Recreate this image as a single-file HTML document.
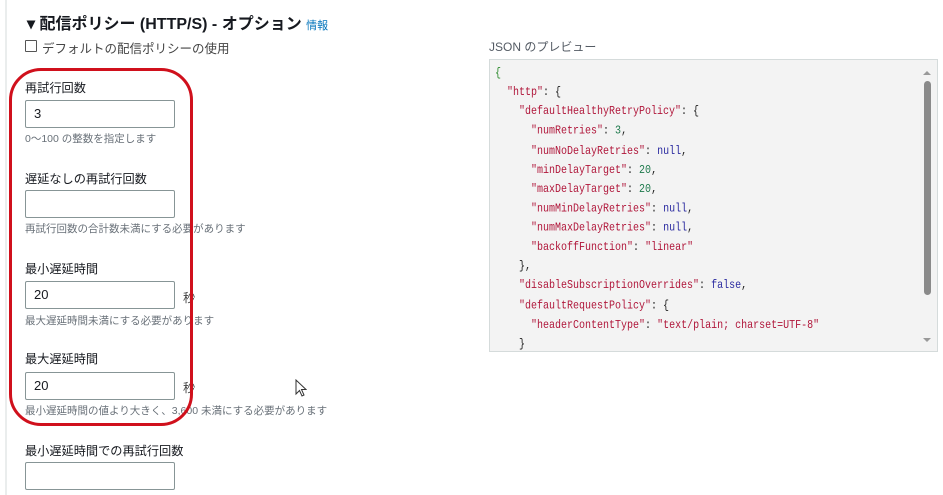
<!DOCTYPE html>
<html><head><meta charset="utf-8"><style>
body{margin:0;width:943px;height:495px;background:#fff;position:relative;overflow:hidden;font-family:"Liberation Sans","Noto Sans CJK JP",sans-serif;color:#16191f}
.a{position:absolute;white-space:nowrap}
.lbl{font-size:12.2px;color:#16191f}
.hint{font-size:10.5px;color:#687078}
.inp{position:absolute;left:25px;width:148px;height:26px;border:1px solid #879596;border-radius:2px;background:#fff;font-size:13px;line-height:26px;text-indent:8px}
.code{position:absolute;left:489px;top:59px;width:447px;height:291px;background:#f3f3f3;border:1px solid #d5dbdb;overflow:hidden}
.code pre{margin:0;position:absolute;left:5px;top:5px;font-family:"Liberation Mono","Noto Sans CJK JP",monospace;font-size:10px;line-height:16.125px;color:#222;transform:scaleY(1.2);transform-origin:0 0}
.k{color:#b0163a}.s{color:#b0163a}.n{color:#1f7a4d}.b{color:#2a2aa0}.g{color:#2e8b2e}
</style></head><body>
<div class="a" style="left:5px;top:0;width:2px;height:495px;background:#eaeded"></div>
<div class="a" style="left:27px;top:10px;font-size:16px;font-weight:bold">▾ 配信ポリシー (HTTP/S) - オプション <span style="font-size:11px;color:#0073bb;font-weight:normal">情報</span></div>
<div class="a" style="left:25px;top:40px;width:10px;height:10px;border:1px solid #555;border-radius:1px"></div>
<div class="a lbl" style="left:42px;top:38px;font-size:12.5px;color:#444">デフォルトの配信ポリシーの使用</div>

<div class="a lbl" style="left:25px;top:78px">再試行回数</div>
<div class="inp" style="top:100px">3</div>
<div class="a hint" style="left:25px;top:131px">0〜100 の整数を指定します</div>

<div class="a lbl" style="left:25px;top:169px">遅延なしの再試行回数</div>
<div class="inp" style="top:190px"></div>
<div class="a hint" style="left:25px;top:221px">再試行回数の合計数未満にする必要があります</div>

<div class="a lbl" style="left:25px;top:259px">最小遅延時間</div>
<div class="inp" style="top:281px">20</div>
<div class="a lbl" style="left:183px;top:288px;color:#444">秒</div>
<div class="a hint" style="left:25px;top:313px">最大遅延時間未満にする必要があります</div>

<div class="a lbl" style="left:25px;top:349px">最大遅延時間</div>
<div class="inp" style="top:372px">20</div>
<div class="a lbl" style="left:183px;top:378px;color:#444">秒</div>
<div class="a hint" style="left:25px;top:403px">最小遅延時間の値より大きく、3,600 未満にする必要があります</div>

<div class="a lbl" style="left:25px;top:441px">最小遅延時間での再試行回数</div>
<div class="inp" style="top:462px"></div>

<div class="a" style="left:9px;top:68px;width:178px;height:352px;border:3px solid #d0101c;border-radius:32px"></div>

<svg class="a" style="left:295px;top:379px" width="12" height="18" viewBox="0 0 12 18"><path d="M1 1 L1 15 L4.5 11.5 L7 17 L9 16 L6.5 10.5 L11 10.5 Z" fill="#fff" stroke="#333" stroke-width="1"/></svg>

<div class="a" style="left:489px;top:38px;font-size:12px;color:#545b64">JSON のプレビュー</div>
<div class="code"><pre><span class="g">{</span>
  <span class="k">"http"</span>: {
    <span class="k">"defaultHealthyRetryPolicy"</span>: {
      <span class="k">"numRetries"</span>: <span class="n">3</span>,
      <span class="k">"numNoDelayRetries"</span>: <span class="b">null</span>,
      <span class="k">"minDelayTarget"</span>: <span class="n">20</span>,
      <span class="k">"maxDelayTarget"</span>: <span class="n">20</span>,
      <span class="k">"numMinDelayRetries"</span>: <span class="b">null</span>,
      <span class="k">"numMaxDelayRetries"</span>: <span class="b">null</span>,
      <span class="k">"backoffFunction"</span>: <span class="s">"linear"</span>
    },
    <span class="k">"disableSubscriptionOverrides"</span>: <span class="b">false</span>,
    <span class="k">"defaultRequestPolicy"</span>: {
      <span class="k">"headerContentType"</span>: <span class="s">"text/plain; charset=UTF-8"</span>
    }</pre>
<div class="a" style="left:433px;top:11px;width:0;height:0;border-left:4px solid transparent;border-right:4px solid transparent;border-bottom:4px solid #999"></div>
<div class="a" style="left:434px;top:21px;width:7px;height:214px;background:#8a8a8a;border-radius:4px"></div>
<div class="a" style="left:433px;top:278px;width:0;height:0;border-left:4px solid transparent;border-right:4px solid transparent;border-top:4px solid #999"></div>
</div>
</body></html>
